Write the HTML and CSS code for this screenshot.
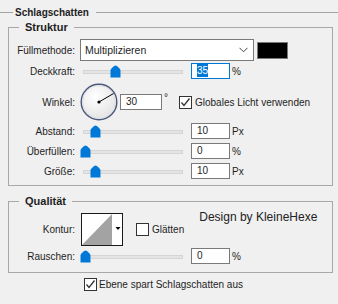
FILE: index.html
```html
<!DOCTYPE html>
<html lang="de">
<head>
    <meta charset="UTF-8">
    <title>Schlagschatten</title>
    <link rel="stylesheet" href="styles.css">
</head>
<body>
    <div class="group-title">Schlagschatten</div>

    <fieldset class="box struktur">
        <legend>Struktur</legend>
        <div class="row row-mode">
            <span class="lbl">Füllmethode:</span>
            <div class="select">
                <span>Multiplizieren</span>
                <svg class="chevron" width="9" height="6" viewBox="0 0 9 6"><path d="M0.5 0.8 L4.5 4.8 L8.5 0.8" fill="none" stroke="#444" stroke-width="1"/></svg>
            </div>
            <div class="swatch"></div>
        </div>
        <div class="row row-input">
            <span class="lbl">Deckkraft:</span>
            <div class="slider">
                <svg class="thumb" style="left: 30px" width="11" height="13" viewBox="0 0 11 13"><path d="M5.5 0.5 C7 0.5 10.5 4 10.5 5.5 V12.5 H0.5 V5.5 C0.5 4 4 0.5 5.5 0.5 Z" fill="#0078d7"/></svg>
            </div>
            <div class="num focus"><span class="sel">35</span></div>
            <span class="unit">%</span>
        </div>
        <div class="row row-angle">
            <span class="lbl">Winkel:</span>
            <svg class="dial" width="38" height="38" viewBox="0 0 38 38">
                <defs>
                    <radialGradient id="dialFill" cx="0.4" cy="0.35" r="0.7">
                        <stop offset="0" stop-color="#ffffff"/>
                        <stop offset="1" stop-color="#e2e2e2"/>
                    </radialGradient>
                </defs>
                <circle cx="19" cy="19" r="17.8" fill="url(#dialFill)" stroke="#4b587a" stroke-width="1.4"/>
                <circle cx="19" cy="19" r="16.4" fill="none" stroke="#d8dbe3" stroke-width="0.8"/>
                <line x1="19" y1="19" x2="33.5" y2="10.5" stroke="#000" stroke-width="1"/>
                <circle cx="19" cy="19" r="1.6" fill="#000"/>
            </svg>
            <div class="num wide">30</div>
            <span class="unit deg">°</span>
            <span class="check">
                <svg width="13" height="13" viewBox="0 0 13 13"><path d="M2.5 6.5 L5 9.5 L10.5 2.5" fill="none" stroke="#333" stroke-width="1.3"/></svg>
            </span>
            <span class="check-text">Globales Licht verwenden</span>
        </div>
        <div class="row row-input row-gap-sm">
            <span class="lbl">Abstand:</span>
            <div class="slider">
                <svg class="thumb" style="left: 10px" width="11" height="13" viewBox="0 0 11 13"><path d="M5.5 0.5 C7 0.5 10.5 4 10.5 5.5 V12.5 H0.5 V5.5 C0.5 4 4 0.5 5.5 0.5 Z" fill="#0078d7"/></svg>
            </div>
            <div class="num">10</div>
            <span class="unit">Px</span>
        </div>
        <div class="row row-input">
            <span class="lbl">Überfüllen:</span>
            <div class="slider">
                <svg class="thumb" style="left: 0px" width="11" height="13" viewBox="0 0 11 13"><path d="M5.5 0.5 C7 0.5 10.5 4 10.5 5.5 V12.5 H0.5 V5.5 C0.5 4 4 0.5 5.5 0.5 Z" fill="#0078d7"/></svg>
            </div>
            <div class="num">0</div>
            <span class="unit">%</span>
        </div>
        <div class="row row-input">
            <span class="lbl">Größe:</span>
            <div class="slider">
                <svg class="thumb" style="left: 10px" width="11" height="13" viewBox="0 0 11 13"><path d="M5.5 0.5 C7 0.5 10.5 4 10.5 5.5 V12.5 H0.5 V5.5 C0.5 4 4 0.5 5.5 0.5 Z" fill="#0078d7"/></svg>
            </div>
            <div class="num">10</div>
            <span class="unit">Px</span>
        </div>
    </fieldset>

    <fieldset class="box qualitaet">
        <legend>Qualität</legend>
        <div class="row row-contour">
            <span class="lbl">Kontur:</span>
            <div class="contour">
                <svg width="40" height="31" viewBox="0 0 40 31">
                    <polygon points="0,31 30,0 30,31" fill="#a3a3a3"/>
                    <polygon points="33.5,13 38.5,13 36,16" fill="#000"/>
                </svg>
            </div>
            <span class="check empty"></span>
            <span class="check-text">Glätten</span>
            <span class="watermark">Design by KleineHexe</span>
        </div>
        <div class="row row-input row-gap-sm">
            <span class="lbl">Rauschen:</span>
            <div class="slider">
                <svg class="thumb" style="left: 0px" width="11" height="13" viewBox="0 0 11 13"><path d="M5.5 0.5 C7 0.5 10.5 4 10.5 5.5 V12.5 H0.5 V5.5 C0.5 4 4 0.5 5.5 0.5 Z" fill="#0078d7"/></svg>
            </div>
            <div class="num">0</div>
            <span class="unit">%</span>
        </div>
    </fieldset>

    <div class="row footer">
        <span class="check">
            <svg width="13" height="13" viewBox="0 0 13 13"><path d="M2.5 6.5 L5 9.5 L10.5 2.5" fill="none" stroke="#333" stroke-width="1.3"/></svg>
        </span>
        <span class="check-text">Ebene spart Schlagschatten aus</span>
    </div>
</body>
</html>
```

FILE: styles.css
```css
body { margin: 0; width: 338px; height: 304px; overflow: hidden; background: #f0f0f0; font-family: "Liberation Sans", Arial, sans-serif; font-size: 10px; color: #1e1e1e; }

.group-title { display: flex; align-items: center; height: 13px; margin-top: 6px; font-weight: bold; font-size: 10px; }
.group-title::before { content: ""; width: 13px; height: 1px; background: #a3a3a3; margin-right: 2px; }
.group-title::after { content: ""; flex: 1; height: 1px; background: #a3a3a3; margin-left: 7px; }

.box { margin: 2px 5px 0 8px; padding: 0 0 6px; border: 1px solid #a8a8a8; min-width: 0; }
.box legend { margin-left: 10px; padding: 0 6px; font-weight: bold; font-size: 11px; line-height: 13px; }
.qualitaet { margin-top: 9px; padding-bottom: 8px; }

.row { display: flex; align-items: center; }
.lbl { width: 66px; flex: none; text-align: right; white-space: nowrap; }

.row-mode { height: 22px; margin-top: 5px; }
.row-input { height: 16px; margin-top: 4px; }
.row-mode + .row-input { margin-top: 2px; }
.row-gap-sm { margin-top: 2px; }
.row-angle { height: 38px; margin-top: 4px; }

.select { display: flex; align-items: center; justify-content: space-between; box-sizing: border-box; width: 174px; height: 22px; margin-left: 5px; padding: 0 5px 0 4px; background: #fff; border: 1px solid #7a7a7a; font-size: 10.5px; }
.chevron { display: block; }
.swatch { box-sizing: border-box; width: 31px; height: 17px; margin-left: 3px; background: #000; border: 1px solid #7a7a7a; }

.slider { position: relative; flex: none; width: 106px; height: 13px; margin-left: 5px; }
.slider::before { content: ""; position: absolute; left: 3px; right: 3px; top: 5px; height: 2px; background: #e4e4e4; border: 1px solid #d5d5d5; }
.thumb { position: absolute; top: 0; display: block; }

.num { box-sizing: border-box; width: 39px; height: 16px; margin-left: 5px; padding-left: 5px; background: #fff; border: 1px solid #7a7a7a; line-height: 14px; }
.num.focus { border-color: #0078d7; }
.num.wide { width: 42px; margin-left: 2px; }
.sel { background: #0078d7; color: #fff; padding: 1px 0; }
.unit { margin-left: 2px; }
.deg { align-self: flex-start; margin: 9px 0 0 2px; }

.dial { display: block; flex: none; margin-left: 5px; }

.check { box-sizing: border-box; display: block; flex: none; width: 13px; height: 13px; margin-left: 11px; background: #fff; border: 1px solid #333; }
.check svg { display: block; margin: -1px; }
.check-text { margin-left: 3px; white-space: nowrap; }

.row-contour { height: 33px; margin-top: 5px; }
.contour { box-sizing: border-box; width: 42px; height: 33px; margin-left: 6px; background: #fff; border: 1px solid #1a1a1a; }
.contour svg { display: block; }
.row-contour .check { margin-left: 13px; }
.watermark { align-self: flex-start; margin: -3px 0 0 15px; font-size: 12px; line-height: 14px; color: #222; white-space: nowrap; }

.footer { height: 13px; margin-top: 5px; }
.footer .check { margin-left: 84px; }
.footer .check-text { margin-left: 2px; }
```
